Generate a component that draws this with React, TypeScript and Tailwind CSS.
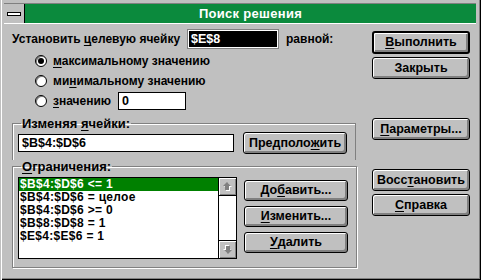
import React from "react";

const F = { fontFamily: '"Liberation Sans", Arial, sans-serif' };

function U({ children }: { children: React.ReactNode }) {
  return <span className="underline underline-offset-[2px] decoration-1">{children}</span>;
}

function Btn({
  children,
  w = "w-[104px]",
  h = "h-[22px]",
  def = false,
  className = "",
}: {
  children: React.ReactNode;
  w?: string;
  h?: string;
  def?: boolean;
  className?: string;
}) {
  return (
    <div
      className={`${w} ${h} ${def ? "border-2" : "border"} shrink-0 border-black rounded-[3px] bg-[#c0c0c0] shadow-[inset_1px_1px_0_#fff,inset_-1px_-1px_0_#808080,inset_-2px_-2px_0_#808080] flex items-center justify-center text-[12.5px] font-bold leading-none text-black ${className}`}
    >
      {children}
    </div>
  );
}

function Radio({ checked = false }: { checked?: boolean }) {
  return (
    <div className="w-[12px] h-[12px] shrink-0 rounded-full border border-black bg-white shadow-[inset_1px_1px_0_#808080] flex items-center justify-center">
      {checked && <div className="w-[6px] h-[6px] rounded-full bg-black" />}
    </div>
  );
}

function Arrow({ up }: { up: boolean }) {
  return (
    <div className="w-[17px] h-[17px] bg-[#c0c0c0] shadow-[inset_1px_1px_0_#fff,inset_-1px_-1px_0_#808080] flex items-center justify-center">
      <svg width="9" height="9" viewBox="0 0 9 9" className={up ? "" : "rotate-180"}>
        <path d="M5 1 L9 5 L7 5 L7 9 L3 9 L3 5 L1 5 Z" fill="#fff" />
        <path d="M4 0 L8 4 L6 4 L6 8 L2 8 L2 4 L0 4 Z" fill="#808080" />
      </svg>
    </div>
  );
}

export default function App() {
  const items = [
    "$B$4:$D$6 <= 1",
    "$B$4:$D$6 = целое",
    "$B$4:$D$6 >= 0",
    "$B$8:$D$8 = 1",
    "$E$4:$E$6 = 1",
  ];
  return (
    <div
      style={F}
      className="w-[481px] h-[280px] bg-[#c0c0c0] text-black shadow-[inset_1px_0_0_#c0c0c0,inset_2px_0_0_#fff,inset_-1px_-1px_0_#000,inset_-2px_-2px_0_#808080] overflow-hidden flex flex-col"
    >
      {/* title bar */}
      <div className="mt-[3px] ml-[4px] w-[472px] h-[21px] flex border-t border-[#808080] border-b border-b-white">
        <div className="w-[21px] h-full border-r border-black flex items-center justify-center bg-[#c0c0c0]">
          <div className="w-[14px] h-[4px] border border-black bg-white" />
        </div>
        <div className="flex-1 bg-[#0b8a3d] flex items-center justify-center text-white font-bold text-[13px] tracking-[0.3px] leading-none pb-[1px]">
          Поиск решения
        </div>
      </div>

      {/* body */}
      <div className="flex pl-[12px]">
        {/* left column */}
        <div className="w-[344px] flex flex-col">
          <div className="mt-[6px] h-[18px] flex items-center text-[12px] font-bold">
            <div className="w-[176px] shrink-0 whitespace-nowrap">
              Установить <U>ц</U>елевую ячейку
            </div>
            <div className="w-[90px] h-[18px] shrink-0 border border-white bg-black shadow-[0_0_0_1px_#808080] text-white flex items-center pl-[2px] text-[12.5px]">
              $E$8
            </div>
            <div className="ml-[8px]">равной:</div>
          </div>

          <div className="mt-[3px] pl-[23px] flex flex-col text-[12px] font-bold">
            <div className="h-[20px] flex items-center gap-[6px]">
              <Radio checked />
              <span>
                <U>м</U>аксимальному значению
              </span>
            </div>
            <div className="h-[20px] flex items-center gap-[6px]">
              <Radio />
              <span>
                ми<U>н</U>имальному значению
              </span>
            </div>
            <div className="h-[20px] flex items-center gap-[6px]">
              <Radio />
              <span className="w-[59px] shrink-0 whitespace-nowrap">
                <U>з</U>начению
              </span>
              <div className="w-[68px] h-[18px] shrink-0 border border-black bg-white flex items-center pl-[3px] text-[12.5px]">0</div>
            </div>
          </div>

          <fieldset className="mt-[6px] w-[344px] border border-[#808080] border-b-0 shadow-[inset_1px_1px_0_#fff] pl-[5px] pr-[8px] pb-[6px]">
            <legend className="ml-[3px] px-[1px] text-[13px] font-bold leading-[13px]">
              Изменяя <U>я</U>чейки:
            </legend>
            <div className="mt-[2px] flex items-center">
              <div className="w-[216px] h-[18px] border border-black bg-white flex items-center pl-[3px] text-[12.5px] font-bold">
                $B$4:$D$6
              </div>
              <Btn className="ml-[9px]">
                Предполо<U>ж</U>ить
              </Btn>
            </div>
          </fieldset>

          <fieldset className="w-[344px] h-[108px] border border-[#808080] shadow-[inset_1px_1px_0_#fff,1px_1px_0_#fff] pl-[5px] pr-[8px]">
            <legend className="ml-[3px] px-[1px] text-[13px] font-bold leading-[13px]">
              <U>О</U>граничения:
            </legend>
            <div className="mt-[4px] flex items-start">
              <div className="w-[219px] h-[82px] border border-black bg-white flex">
                <div className="flex-1 flex flex-col text-[12px] tracking-[0.3px] font-bold">
                  {items.map((t, i) => (
                    <div
                      key={i}
                      className={`h-[13px] leading-[13px] pl-[1px] whitespace-pre ${
                        i === 0 ? "bg-[#008000] text-white" : ""
                      }`}
                    >
                      {t}
                    </div>
                  ))}
                </div>
                <div className="w-[18px] border-l border-black flex flex-col justify-between bg-white">
                  <div className="border-b border-black">
                    <Arrow up />
                  </div>
                  <div className="border-t border-black">
                    <Arrow up={false} />
                  </div>
                </div>
              </div>
              <div className="ml-[7px] mt-[3px] flex flex-col gap-[5px]">
                <Btn h="h-[21px]">
                  До<U>б</U>авить...
                </Btn>
                <Btn h="h-[21px]">
                  <U>И</U>зменить...
                </Btn>
                <Btn h="h-[21px]">
                  <U>У</U>далить
                </Btn>
              </div>
            </div>
          </fieldset>
        </div>

        {/* right column */}
        <div className="ml-[16px] flex flex-col">
          <Btn def w="w-[98px]" h="h-[23px]" className="mt-[7px]">
            <U>В</U>ыполнить
          </Btn>
          <Btn w="w-[98px]" h="h-[22px]" className="mt-[3px]">
            Закрыть
          </Btn>
          <Btn w="w-[98px]" h="h-[22px]" className="mt-[39px]">
            <U>П</U>араметры...
          </Btn>
          <Btn w="w-[98px]" h="h-[22px]" className="mt-[29px]">
            Восс<U>т</U>ановить
          </Btn>
          <Btn w="w-[98px]" h="h-[22px]" className="mt-[3px]">
            <U>С</U>правка
          </Btn>
        </div>
      </div>
    </div>
  );
}
